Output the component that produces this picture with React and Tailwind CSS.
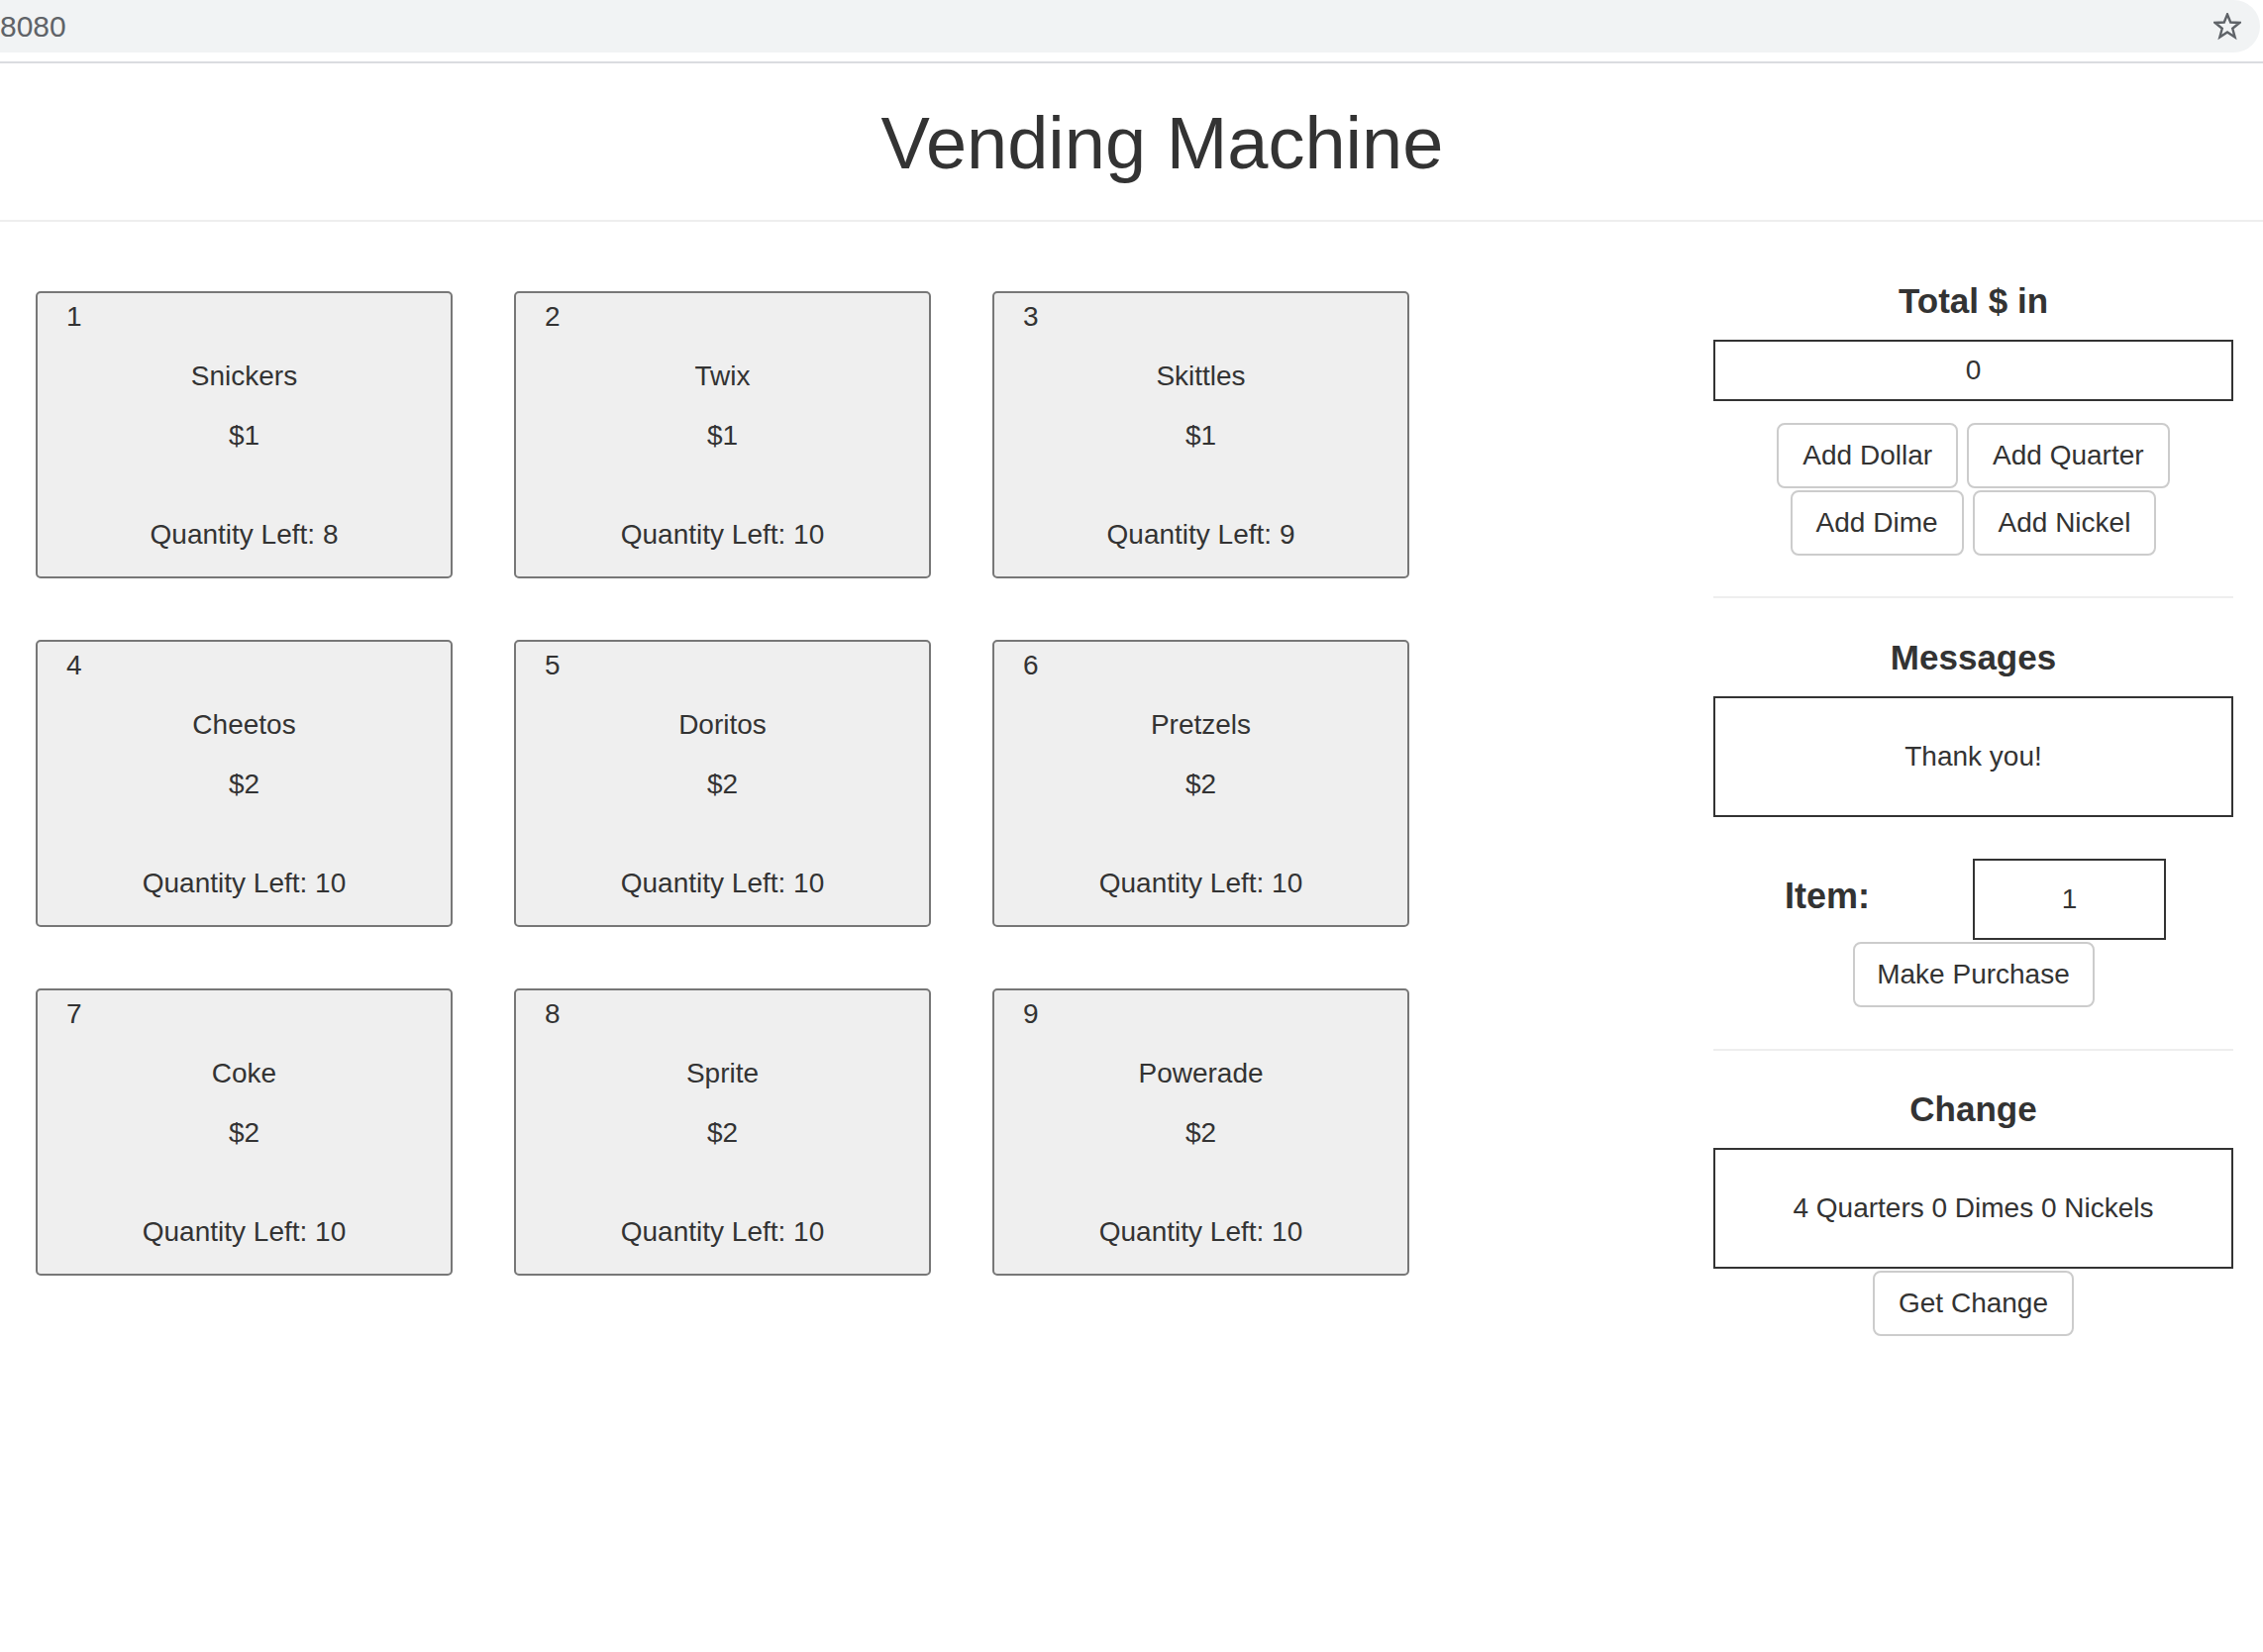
import React from "react";

const items = [
  { n: 1, name: "Snickers", price: "$1", q: 8 },
  { n: 2, name: "Twix", price: "$1", q: 10 },
  { n: 3, name: "Skittles", price: "$1", q: 9 },
  { n: 4, name: "Cheetos", price: "$2", q: 10 },
  { n: 5, name: "Doritos", price: "$2", q: 10 },
  { n: 6, name: "Pretzels", price: "$2", q: 10 },
  { n: 7, name: "Coke", price: "$2", q: 10 },
  { n: 8, name: "Sprite", price: "$2", q: 10 },
  { n: 9, name: "Powerade", price: "$2", q: 10 },
];

function Btn({ children, className = "" }) {
  return (
    <button
      className={
        "h-[66px] px-[24px] whitespace-nowrap border-2 border-[#cccccc] rounded-[8px] bg-white text-[28px] leading-[40px] text-[#333] " +
        className
      }
    >
      {children}
    </button>
  );
}

function Card({ it }) {
  return (
    <div className="w-[421px] h-[290px] bg-[#efefef] border-2 border-[#777777] rounded-[5px] pt-[4px] text-[28px] leading-[40px]">
      <div className="pl-[29px]">{it.n}</div>
      <div className="text-center mt-[20px]">{it.name}</div>
      <div className="text-center mt-[20px]">{it.price}</div>
      <div className="text-center mt-[60px]">Quantity Left: {it.q}</div>
    </div>
  );
}

export default function App() {
  return (
    <div className="min-h-screen bg-white text-[#333333] [font-family:'Liberation_Sans',Arial,sans-serif]">
      <div className="h-[53px] bg-[#f1f3f4] rounded-r-[27px] mr-[3px] flex items-center justify-between pr-[19px]">
        <span className="text-[30px] leading-none text-[#5f6368]">8080</span>
        <svg width="28" height="28" viewBox="0 0 28 28" fill="none">
          <polygon
            points="14,1.5 17.23,9.55 26.36,9.98 19.23,15.7 21.64,24.52 14,19.5 6.36,24.52 8.77,15.7 1.64,9.98 10.77,9.55"
            stroke="#5f6368"
            strokeWidth="2.4"
            strokeLinejoin="miter"
          />
        </svg>
      </div>
      <div className="h-[9px]" />
      <div className="h-[2px] bg-[#dadce0]" />
      <h1 className="mt-[40px] pl-[62px] text-center text-[74px] leading-[81px] font-normal">
        Vending Machine
      </h1>
      <div className="mt-[37px] h-[2px] bg-[#eeeeee]" />
      <div className="flex">
        <div className="pl-[36px] pt-[70px] grid grid-cols-[repeat(3,421px)] gap-[62px] content-start">
          {items.map((it) => (
            <Card key={it.n} it={it} />
          ))}
        </div>
        <div className="ml-auto mr-[30px] w-[525px] pt-[60px] flex flex-col">
          <h3 className="text-center text-[35px] leading-[40px] font-bold">Total $ in</h3>
          <div className="mt-[19px] h-[62px] border-2 border-[#333333] flex items-center justify-center text-[28px]">
            0
          </div>
          <div className="mt-[22px] flex flex-col items-center gap-[2px]">
            <div className="flex gap-[9px]">
              <Btn>Add Dollar</Btn>
              <Btn>Add Quarter</Btn>
            </div>
            <div className="flex gap-[9px]">
              <Btn>Add Dime</Btn>
              <Btn>Add Nickel</Btn>
            </div>
          </div>
          <div className="mt-[41px] h-[2px] bg-[#eeeeee]" />
          <h3 className="mt-[40px] text-center text-[35px] leading-[40px] font-bold">Messages</h3>
          <div className="mt-[19px] h-[122px] border-2 border-[#333333] flex items-center justify-center text-[28px]">
            Thank you!
          </div>
          <div className="mt-[42px] flex items-start">
            <div className="w-[262px] pl-[72px] pt-[18px] text-[36px] leading-[40px] font-bold">Item:</div>
            <div className="w-[195px] h-[82px] border-2 border-[#333333] flex items-center justify-center text-[28px]">
              1
            </div>
          </div>
          <div className="mt-[2px] flex justify-center">
            <Btn className="w-[244px] !px-0">Make Purchase</Btn>
          </div>
          <div className="mt-[42px] h-[2px] bg-[#eeeeee]" />
          <h3 className="mt-[39px] text-center text-[35px] leading-[40px] font-bold">Change</h3>
          <div className="mt-[19px] h-[122px] border-2 border-[#333333] flex items-center justify-center text-[28px]">
            4 Quarters 0 Dimes 0 Nickels
          </div>
          <div className="mt-[2px] flex justify-center">
            <Btn>Get Change</Btn>
          </div>
        </div>
      </div>
    </div>
  );
}
